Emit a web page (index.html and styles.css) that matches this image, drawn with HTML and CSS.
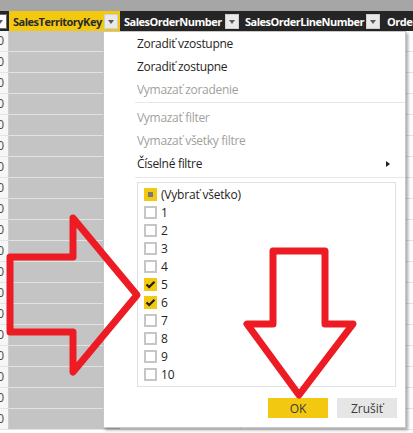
FILE: index.html
```html
<!DOCTYPE html>
<html lang="sk">
<head>
    <meta charset="UTF-8">
    <meta name="viewport" content="width=device-width, initial-scale=1.0">
    <title>Filter</title>
    <link rel="stylesheet" href="styles.css">
</head>
<body>
    <div class="sheet">
        <div class="topbar"></div>
        <div class="hdr">
            <div class="hcell stub"><span class="dd dd-light"></span></div>
            <div class="hcell col-key active"><span class="hname">SalesTerritoryKey</span><span class="dd"></span></div>
            <div class="hcell col-num"><span class="hname">SalesOrderNumber</span><span class="dd"></span></div>
            <div class="hcell col-line"><span class="hname">SalesOrderLineNumber</span><span class="dd"></span></div>
            <div class="hcell col-rest"><span class="hname">Order</span></div>
        </div>
        <div class="rows">
            <div class="row"><div class="c stub">0</div><div class="c col-key"></div><div class="c col-num"></div><div class="c col-line"></div><div class="c col-rest"></div></div>
            <div class="row"><div class="c stub">0</div><div class="c col-key"></div><div class="c col-num"></div><div class="c col-line"></div><div class="c col-rest"></div></div>
            <div class="row"><div class="c stub">0</div><div class="c col-key"></div><div class="c col-num"></div><div class="c col-line"></div><div class="c col-rest"></div></div>
            <div class="row"><div class="c stub">0</div><div class="c col-key"></div><div class="c col-num"></div><div class="c col-line"></div><div class="c col-rest"></div></div>
            <div class="row"><div class="c stub">0</div><div class="c col-key"></div><div class="c col-num"></div><div class="c col-line"></div><div class="c col-rest"></div></div>
            <div class="row"><div class="c stub">0</div><div class="c col-key"></div><div class="c col-num"></div><div class="c col-line"></div><div class="c col-rest"></div></div>
            <div class="row"><div class="c stub">0</div><div class="c col-key"></div><div class="c col-num"></div><div class="c col-line"></div><div class="c col-rest"></div></div>
            <div class="row"><div class="c stub">0</div><div class="c col-key"></div><div class="c col-num"></div><div class="c col-line"></div><div class="c col-rest"></div></div>
            <div class="row"><div class="c stub">0</div><div class="c col-key"></div><div class="c col-num"></div><div class="c col-line"></div><div class="c col-rest"></div></div>
            <div class="row"><div class="c stub">0</div><div class="c col-key"></div><div class="c col-num"></div><div class="c col-line"></div><div class="c col-rest"></div></div>
            <div class="row"><div class="c stub">0</div><div class="c col-key"></div><div class="c col-num"></div><div class="c col-line"></div><div class="c col-rest"></div></div>
            <div class="row"><div class="c stub">0</div><div class="c col-key"></div><div class="c col-num"></div><div class="c col-line"></div><div class="c col-rest"></div></div>
            <div class="row"><div class="c stub">0</div><div class="c col-key"></div><div class="c col-num"></div><div class="c col-line"></div><div class="c col-rest"></div></div>
            <div class="row"><div class="c stub">0</div><div class="c col-key"></div><div class="c col-num"></div><div class="c col-line"></div><div class="c col-rest"></div></div>
            <div class="row"><div class="c stub">0</div><div class="c col-key"></div><div class="c col-num"></div><div class="c col-line"></div><div class="c col-rest"></div></div>
            <div class="row"><div class="c stub">0</div><div class="c col-key"></div><div class="c col-num"></div><div class="c col-line"></div><div class="c col-rest"></div></div>
            <div class="row"><div class="c stub">0</div><div class="c col-key"></div><div class="c col-num"></div><div class="c col-line"></div><div class="c col-rest"></div></div>
            <div class="row"><div class="c stub">0</div><div class="c col-key"></div><div class="c col-num"></div><div class="c col-line"></div><div class="c col-rest"></div></div>
            <div class="row"><div class="c stub">0</div><div class="c col-key"></div><div class="c col-num"></div><div class="c col-line"></div><div class="c col-rest"></div></div>
        </div>

        <!-- rozbalovacie menu filtra -->
        <div class="menu">
            <div class="mitem">Zoradiť vzostupne</div>
            <div class="mitem">Zoradiť zostupne</div>
            <div class="mitem disabled">Vymazať zoradenie</div>
            <div class="sep"></div>
            <div class="mitem disabled">Vymazať filter</div>
            <div class="mitem disabled">Vymazať všetky filtre</div>
            <div class="mitem sub">Číselné filtre<span class="caret"></span></div>
            <div class="sep sep-low"></div>
            <div class="list">
                <div class="opt"><span class="cb partial"></span>(Vybrať všetko)</div>
                <div class="opt"><span class="cb"></span>1</div>
                <div class="opt"><span class="cb"></span>2</div>
                <div class="opt"><span class="cb"></span>3</div>
                <div class="opt"><span class="cb"></span>4</div>
                <div class="opt"><span class="cb checked"><svg viewBox="0 0 13 13" width="13" height="13"><path d="M2.5 6.5 L5.2 9 L10.5 3.8" fill="none" stroke="#1e1e1e" stroke-width="2.2"/></svg></span>5</div>
                <div class="opt"><span class="cb checked"><svg viewBox="0 0 13 13" width="13" height="13"><path d="M2.5 6.5 L5.2 9 L10.5 3.8" fill="none" stroke="#1e1e1e" stroke-width="2.2"/></svg></span>6</div>
                <div class="opt"><span class="cb"></span>7</div>
                <div class="opt"><span class="cb"></span>8</div>
                <div class="opt"><span class="cb"></span>9</div>
                <div class="opt"><span class="cb"></span>10</div>
            </div>
            <div class="actions">
                <button class="btn btn-ok" type="button">OK</button>
                <button class="btn" type="button">Zrušiť</button>
            </div>
        </div>

        <!-- sipky -->
        <svg class="marks" width="413" height="433" viewBox="0 0 413 433">
            <polygon points="10,257 73,257 73,218 137,295 73,372 73,332 10,332" fill="none" stroke="#ed1c24" stroke-width="7" stroke-linejoin="round"/>
            <polygon points="273,251 325,251 325,324 353,324 299,395 247,324 273,324" fill="none" stroke="#ed1c24" stroke-width="7" stroke-linejoin="round"/>
        </svg>
    </div>
</body>
</html>
```

FILE: styles.css
```css
:root {
    --yellow: #f2c811;
    --dark: #252525;
    --text: #252423;
    --muted: #a19f9d;
    --line: #e4e4e4;
}
body {
    margin: 0;
    font-family: 'Open Sans', 'Noto Sans', sans-serif;
    background: #ffffff;
    overflow: hidden;
}
.sheet {
    position: relative;
    width: 413px;
    height: 433px;
    overflow: hidden;
}
.topbar {
    height: 11px;
    background: #a6a6a6;
}
.hdr {
    display: flex;
    height: 20px;
    background: var(--dark);
}
.hcell {
    display: flex;
    align-items: center;
    justify-content: space-between;
    box-sizing: border-box;
    padding: 0 2px 0 4px;
    overflow: hidden;
    flex-shrink: 0;
}
.hname {
    color: #ffffff;
    font-size: 11px;
    font-weight: 700;
    letter-spacing: -0.5px;
    white-space: nowrap;
}
.hcell.active {
    background: var(--yellow);
}
.hcell.active .hname {
    color: #2b2b2b;
}
.hcell.stub {
    justify-content: flex-end;
    padding: 0 2px 0 0;
}
.stub { width: 9px; }
.col-key { width: 111px; }
.col-num { width: 121px; }
.col-line { width: 141px; }
.col-rest { flex: 1; }
.hdr .col-rest {
    justify-content: flex-start;
    padding-left: 5px;
}
.dd {
    position: relative;
    flex-shrink: 0;
    width: 14px;
    height: 15px;
    box-sizing: border-box;
    background: #e9e9e9;
    border: 1px solid #cfcfcf;
}
.dd::after {
    content: "";
    position: absolute;
    left: 3px;
    top: 5px;
    border-left: 3.5px solid transparent;
    border-right: 3.5px solid transparent;
    border-top: 4px solid #5a5a5a;
}
.dd-light {
    background: #ffffff;
    border-color: #6d6d6d;
}
.row {
    display: flex;
    height: 21px;
}
.c {
    box-sizing: border-box;
    flex-shrink: 0;
    border-bottom: 1px solid var(--line);
}
.c.stub {
    display: flex;
    justify-content: flex-end;
    background: #f6f6f6;
    border-right: 1px solid #cfcfcf;
    color: #4a4a4a;
    font-size: 12px;
    line-height: 20px;
    padding-right: 4px;
    overflow: hidden;
}
.c.col-key {
    background: #c4c4c4;
    border-bottom-color: #e2e2e2;
}
.c.col-num, .c.col-line {
    border-right: 1px solid var(--line);
}
.c.col-rest {
    flex: 1;
}
.menu {
    position: absolute;
    left: 103px;
    top: 31px;
    width: 303px;
    box-sizing: border-box;
    background: #ffffff;
    border: 1px solid #c8c8c8;
    box-shadow: 2px 2px 3px rgba(0, 0, 0, 0.35);
    padding-bottom: 9px;
}
.mitem {
    display: flex;
    align-items: center;
    height: 23px;
    padding: 0 15px 0 33px;
    font-size: 12px;
    letter-spacing: -0.3px;
    color: var(--text);
}
.mitem.disabled {
    color: var(--muted);
}
.caret {
    margin-left: auto;
    border-left: 4px solid #1e1e1e;
    border-top: 3.5px solid transparent;
    border-bottom: 3.5px solid transparent;
}
.sep {
    height: 1px;
    background: #e6e6e6;
    margin: 1px 0 3px 31px;
}
.sep-low {
    margin: 2px 0 4px 31px;
}
.list {
    margin: 0 9px 0 33px;
    border: 1px solid #e1e1e1;
    padding: 2px 0 3px 6px;
}
.opt {
    display: flex;
    align-items: center;
    gap: 4px;
    height: 18px;
    font-size: 12px;
    letter-spacing: -0.2px;
    color: var(--text);
}
.cb {
    display: flex;
    align-items: center;
    justify-content: center;
    width: 13px;
    height: 13px;
    box-sizing: border-box;
    border: 2px solid #c6c6c6;
}
.cb.checked {
    border: none;
    background: var(--yellow);
}
.cb.partial {
    border: none;
    background: var(--yellow);
}
.cb.partial::after {
    content: "";
    width: 5px;
    height: 5px;
    background: #7a7a7a;
}
.actions {
    display: flex;
    justify-content: flex-end;
    gap: 9px;
    margin: 11px 8px 0 0;
}
.btn {
    width: 60px;
    height: 20px;
    border: none;
    padding: 0;
    background: #e6e6e6;
    color: #3a3a3a;
    font-family: inherit;
    font-size: 12px;
}
.btn-ok {
    background: var(--yellow);
}
.marks {
    position: absolute;
    left: 0;
    top: 0;
    pointer-events: none;
}
```
